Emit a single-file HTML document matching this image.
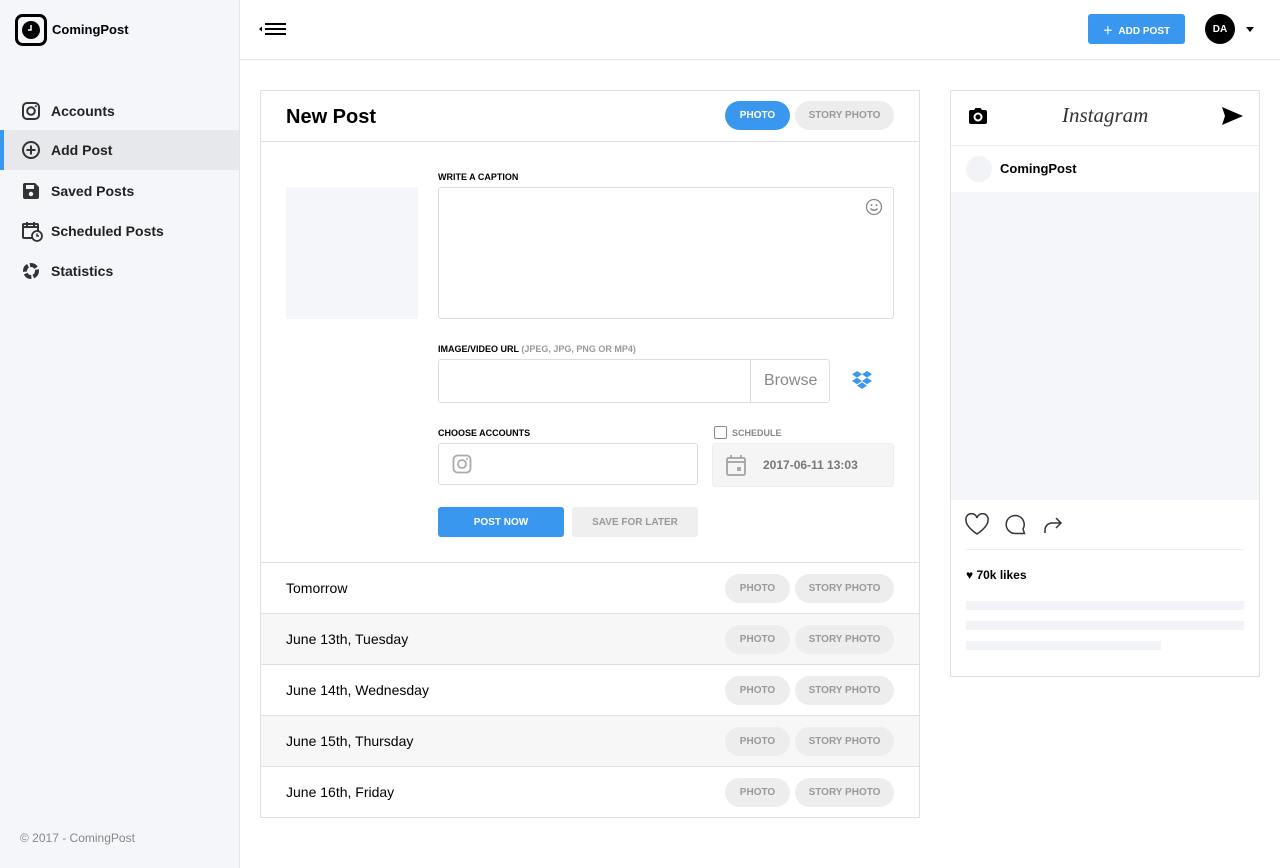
<!DOCTYPE html>
<html><head><meta charset="utf-8"><style>
*{box-sizing:border-box;margin:0;padding:0}
body{width:1280px;height:868px;font-family:"Liberation Sans",sans-serif;background:#fff;position:relative;overflow:hidden;color:#000}
.abs{position:absolute}
.side{left:0;top:0;width:240px;height:868px;background:#f5f6fa;border-right:1px solid #e3e4e8}
.nav{left:0;width:239px;height:40px;display:flex;align-items:center;padding-left:51px;font-size:14px;font-weight:bold;color:#222}
.nav svg{position:absolute;left:21px}
.hdr{left:240px;top:0;width:1040px;height:60px;border-bottom:1px solid #e3e4e8}
.card{border:1px solid #e0e0e0;background:#fff}
.pill{position:absolute;height:29px;border-radius:15px;font-size:10px;font-weight:bold;display:flex;align-items:center;justify-content:center;background:#ededed;color:#999}
.lbl{font-size:9px;font-weight:bold;position:absolute}
.row{position:absolute;left:261px;width:658px;height:51px;border-top:1px solid #e0e0e0;display:flex;align-items:center;padding-left:25px;font-size:14px}
.row.g{background:#f7f7f7}
.bar{position:absolute;left:966px;height:9px;background:#f2f3f7}
</style></head><body>
<div class="abs side"></div>
<svg class="abs" style="left:15px;top:14px" width="32" height="32" viewBox="0 0 32 32"><rect x="1.5" y="1.5" width="29" height="29" rx="6" fill="none" stroke="#000" stroke-width="3"/><circle cx="16" cy="16" r="9" fill="#000"/><path d="M16 11v5h-3" stroke="#fff" stroke-width="1.5" fill="none"/></svg>
<div class="abs" style="left:52px;top:22px;font-size:13px;font-weight:bold">ComingPost</div>
<div class="abs nav" style="top:91px"><svg width="20" height="20" viewBox="0 0 20 20"><rect x="2" y="2" width="16" height="16" rx="4" fill="none" stroke="#333" stroke-width="2"/><circle cx="10" cy="10" r="3.8" fill="none" stroke="#333" stroke-width="2"/><circle cx="14.8" cy="5.2" r="1" fill="#333"/></svg>Accounts</div>
<div class="abs nav" style="top:130px;background:#e7e8ec;border-left:4px solid #3a97f0"><svg width="20" height="20" viewBox="0 0 20 20" style="left:17px"><circle cx="10" cy="10" r="8" fill="none" stroke="#333" stroke-width="2"/><path d="M10 5.5v9M5.5 10h9" stroke="#333" stroke-width="2"/></svg><span style="margin-left:-4px">Add Post</span></div>
<div class="abs nav" style="top:171px"><svg width="20" height="20" viewBox="0 0 20 20"><path d="M2 4a2 2 0 0 1 2-2h10l4 4v10a2 2 0 0 1-2 2H4a2 2 0 0 1-2-2z" fill="#333"/><rect x="5" y="4" width="8" height="4" fill="#f5f6fa"/><circle cx="10" cy="13" r="2.2" fill="#f5f6fa"/></svg>Saved Posts</div>
<div class="abs nav" style="top:211px"><svg width="22" height="22" viewBox="0 0 22 22"><rect x="2" y="4" width="15" height="14" rx="1" fill="none" stroke="#333" stroke-width="2"/><path d="M2 7h15M6 2v4M13 2v4" stroke="#333" stroke-width="2"/><circle cx="16" cy="16" r="5" fill="#f5f6fa" stroke="#333" stroke-width="1.8"/><path d="M16 13.5v2.5h2" stroke="#333" stroke-width="1.5" fill="none"/></svg>Scheduled Posts</div>
<div class="abs nav" style="top:251px"><svg width="20" height="20" viewBox="0 0 20 20"><circle cx="10" cy="10" r="6" fill="none" stroke="#333" stroke-width="4" stroke-dasharray="7 2"/></svg>Statistics</div>
<div class="abs" style="left:20px;top:831px;font-size:12px;color:#888">© 2017 - ComingPost</div>

<div class="abs hdr"></div>
<svg class="abs" style="left:259px;top:22px" width="28" height="14" viewBox="0 0 28 14"><path d="M0 7l3-2.5v5z" fill="#000"/><path d="M6 2h21M6 7h21M6 12h21" stroke="#000" stroke-width="2"/></svg>
<div class="abs" style="left:1088px;top:14px;width:97px;height:30px;background:#3a97f0;border-radius:3px;color:#fff;font-size:10px;font-weight:bold;display:flex;align-items:center;justify-content:center">＋&nbsp;&nbsp;ADD POST</div>
<div class="abs" style="left:1205px;top:14px;width:30px;height:30px;border-radius:50%;background:#000;color:#fff;font-size:10px;font-weight:bold;display:flex;align-items:center;justify-content:center">DA</div>
<div class="abs" style="left:1246px;top:27px;border:4.5px solid transparent;border-top:5px solid #000"></div>

<div class="abs card" style="left:260px;top:90px;width:660px;height:728px"></div>
<div class="abs" style="left:261px;top:141px;width:658px;height:1px;background:#e0e0e0"></div>
<div class="abs" style="left:286px;top:106px;font-size:20px;font-weight:bold">New Post</div>
<div class="pill" style="left:725px;top:101px;width:65px;background:#3a97f0;color:#fff">PHOTO</div>
<div class="pill" style="left:795px;top:101px;width:99px">STORY PHOTO</div>
<div class="abs" style="left:286px;top:187px;width:132px;height:132px;background:#f5f6fa"></div>
<div class="lbl" style="left:438px;top:172px">WRITE A CAPTION</div>
<div class="abs" style="left:438px;top:187px;width:456px;height:132px;border:1px solid #ddd;border-radius:3px"></div>
<svg class="abs" style="left:865px;top:198px" width="18" height="18" viewBox="0 0 18 18"><circle cx="9" cy="9" r="7.5" fill="none" stroke="#888" stroke-width="1.3"/><circle cx="6.5" cy="7" r="1" fill="#888"/><circle cx="11.5" cy="7" r="1" fill="#888"/><path d="M5.5 10.5q3.5 3.5 7 0" stroke="#888" stroke-width="1.3" fill="none"/></svg>
<div class="lbl" style="left:438px;top:344px">IMAGE/VIDEO URL <span style="color:#999">(JPEG, JPG, PNG OR MP4)</span></div>
<div class="abs" style="left:438px;top:359px;width:392px;height:44px;border:1px solid #ddd;border-radius:3px"></div>
<div class="abs" style="left:750px;top:360px;width:1px;height:42px;background:#ddd"></div>
<div class="abs" style="left:764px;top:372px;font-size:16px;color:#888">Browse</div>
<svg class="abs" style="left:851px;top:369px" width="22" height="22" viewBox="0 0 22 22" fill="#3a97f0"><path d="M6 2l5 3.3-5 3.3-5-3.3zM16 2l5 3.3-5 3.3-5-3.3zM1 12l5-3.3 5 3.3-5 3.3zM21 12l-5-3.3-5 3.3 5 3.3zM6 16.6l5-3.2 5 3.2-5 3.3z"/></svg>
<div class="lbl" style="left:438px;top:428px">CHOOSE ACCOUNTS</div>
<div class="abs" style="left:438px;top:443px;width:260px;height:42px;border:1px solid #ddd;border-radius:3px"></div>
<svg class="abs" style="left:452px;top:454px" width="20" height="20" viewBox="0 0 20 20"><rect x="1.5" y="1.5" width="17" height="17" rx="4" fill="none" stroke="#aaa" stroke-width="1.8"/><circle cx="10" cy="10" r="4" fill="none" stroke="#aaa" stroke-width="1.8"/><circle cx="15" cy="5" r="1" fill="#aaa"/></svg>
<div class="abs" style="left:714px;top:426px;width:13px;height:13px;border:1.5px solid #888;border-radius:2px"></div>
<div class="lbl" style="left:732px;top:428px;color:#888">SCHEDULE</div>
<div class="abs" style="left:712px;top:443px;width:182px;height:44px;background:#f5f5f5;border:1px solid #eee;border-radius:3px"></div>
<svg class="abs" style="left:726px;top:454px" width="20" height="22" viewBox="0 0 20 22"><rect x="1" y="4" width="18" height="17" rx="1.5" fill="none" stroke="#aaa" stroke-width="2"/><path d="M1 8h18M5 1v4M15 1v4" stroke="#aaa" stroke-width="2"/><rect x="11" y="13" width="4" height="4" fill="#aaa"/></svg>
<div class="abs" style="left:763px;top:458px;font-size:12px;font-weight:bold;color:#777">2017-06-11 13:03</div>
<div class="abs" style="left:438px;top:507px;width:126px;height:30px;background:#3a97f0;border-radius:3px;color:#fff;font-size:10px;font-weight:bold;display:flex;align-items:center;justify-content:center">POST NOW</div>
<div class="abs" style="left:572px;top:507px;width:126px;height:30px;background:#efefef;border-radius:3px;color:#999;font-size:10px;font-weight:bold;display:flex;align-items:center;justify-content:center">SAVE FOR LATER</div>

<div class="row" style="top:562px">Tomorrow</div>
<div class="row g" style="top:613px">June 13th, Tuesday</div>
<div class="row" style="top:664px">June 14th, Wednesday</div>
<div class="row g" style="top:715px">June 15th, Thursday</div>
<div class="row" style="top:766px">June 16th, Friday</div>
<div class="pill" style="left:725px;top:574px;width:65px">PHOTO</div><div class="pill" style="left:795px;top:574px;width:99px">STORY PHOTO</div>
<div class="pill" style="left:725px;top:625px;width:65px">PHOTO</div><div class="pill" style="left:795px;top:625px;width:99px">STORY PHOTO</div>
<div class="pill" style="left:725px;top:676px;width:65px">PHOTO</div><div class="pill" style="left:795px;top:676px;width:99px">STORY PHOTO</div>
<div class="pill" style="left:725px;top:727px;width:65px">PHOTO</div><div class="pill" style="left:795px;top:727px;width:99px">STORY PHOTO</div>
<div class="pill" style="left:725px;top:778px;width:65px">PHOTO</div><div class="pill" style="left:795px;top:778px;width:99px">STORY PHOTO</div>

<div class="abs card" style="left:950px;top:90px;width:310px;height:587px"></div>
<div class="abs" style="left:951px;top:145px;width:308px;height:1px;background:#eee"></div>
<svg class="abs" style="left:968px;top:107px" width="20" height="18" viewBox="0 0 20 18"><path d="M1 5a2 2 0 0 1 2-2h3l1.5-2h5L14 3h3a2 2 0 0 1 2 2v10a2 2 0 0 1-2 2H3a2 2 0 0 1-2-2z" fill="#000"/><circle cx="10" cy="10" r="3.5" fill="none" stroke="#fff" stroke-width="2"/></svg>
<div class="abs" style="left:1062px;top:103px;font-family:'Liberation Serif',serif;font-style:italic;font-size:21px;color:#333">Instagram</div>
<svg class="abs" style="left:1222px;top:107px" width="21" height="18" viewBox="0 0 21 18"><path d="M0 0l21 9-21 9 3-9z" fill="#000"/></svg>
<div class="abs" style="left:966px;top:156px;width:26px;height:26px;border-radius:50%;background:#f2f3f7"></div>
<div class="abs" style="left:1000px;top:161px;font-size:13px;font-weight:bold">ComingPost</div>
<div class="abs" style="left:951px;top:192px;width:308px;height:308px;background:#f5f6fa"></div>
<svg class="abs" style="left:965px;top:513px" width="100" height="24" viewBox="0 0 100 24"><path d="M12 21S1 14 1 7.5A5 5 0 0 1 12 5a5 5 0 0 1 11 2.5C23 14 12 21 12 21z" fill="none" stroke="#333" stroke-width="1.5"/><path d="M50 20.5A9 9 0 1 1 58 16l1.5 4.5z" fill="none" stroke="#333" stroke-width="1.5"/><path d="M80 20v-3a7 7 0 0 1 7-7h9M91 5l5 5-5 5" fill="none" stroke="#333" stroke-width="1.5"/></svg>
<div class="abs" style="left:966px;top:549px;width:278px;height:1px;background:#eee"></div>
<div class="abs" style="left:966px;top:568px;font-size:12px;font-weight:bold">♥ 70k likes</div>
<div class="bar" style="top:601px;width:278px"></div>
<div class="bar" style="top:621px;width:278px"></div>
<div class="bar" style="top:641px;width:195px"></div>
</body></html>
